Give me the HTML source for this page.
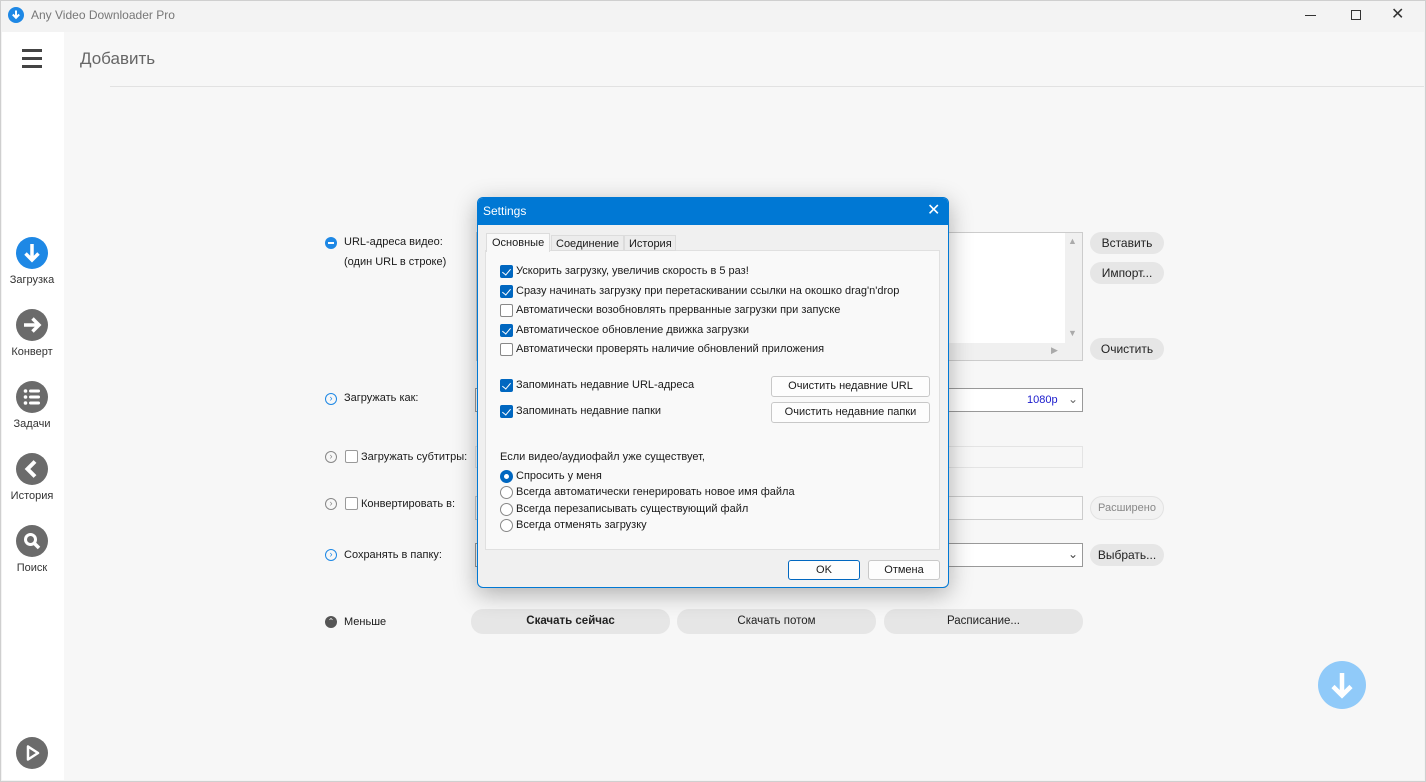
<!DOCTYPE html>
<html><head><meta charset="utf-8"><style>
*{box-sizing:border-box;margin:0;padding:0}
body{width:1426px;height:782px;background:#f3f3f3;font-family:"Liberation Sans","DejaVu Sans",sans-serif;font-size:12px;color:#1a1a1a;position:relative;overflow:hidden}
.abs{position:absolute}
.win{left:0;top:0;width:1426px;height:782px;border:1px solid #cfcfcf;background:#f3f3f3}
.side{left:2px;top:32px;width:62px;height:748px;background:#fff}
.main{left:64px;top:32px;width:1360px;height:748px;background:#f7f7f7}
.lbl{font-size:11px;color:#333;width:62px;text-align:center}
.btn{background:#e6e6e6;border-radius:12px;text-align:center;line-height:22px;font-size:12px;color:#222}
.field{background:#fff;border:1px solid #bdbdbd}
.dlg{left:477px;top:197px;width:472px;height:391px;background:#f0f0f0;border:1px solid #0078d4;border-radius:6px;box-shadow:0 6px 24px rgba(0,0,0,.3);overflow:hidden}
.cb{width:13px;height:13px;border:1px solid #888;background:#fff;border-radius:2px}
.cb.on{background:#0067c0;border-color:#0067c0}
.cb.on::after{content:"";position:absolute;left:3px;top:1px;width:4px;height:7px;border:solid #fff;border-width:0 1.5px 1.5px 0;transform:rotate(40deg)}
.rd{width:13px;height:13px;border:1px solid #888;border-radius:50%;background:#fff}
.t{font-size:11px;white-space:nowrap}
.pb{background:#fdfdfd;border:1px solid #c8c8c8;border-radius:3px;text-align:center;font-size:11px;line-height:19px}
.ci{width:12px;height:12px;border-radius:50%;border:1px solid #1e88e5;color:#1e88e5;font-size:9px;line-height:9px;text-align:center}
</style></head><body>
<div class="abs win"></div>
<svg class="abs" style="left:8px;top:7px" width="16" height="16"><circle cx="8" cy="8" r="8" fill="#1e88e5"/><path d="M8 3.5v7M4.8 7.5L8 10.8 11.2 7.5" stroke="#fff" stroke-width="2" fill="none"/></svg>
<div class="abs" style="left:31px;top:8px;font-size:12px;color:#777">Any Video Downloader Pro</div>
<div class="abs" style="left:1305px;top:15px;width:11px;border-top:1px solid #333"></div>
<div class="abs" style="left:1351px;top:10px;width:10px;height:10px;border:1px solid #333"></div>
<div class="abs" style="left:1391px;top:4px;font-size:16px;color:#333">✕</div>
<div class="abs side"></div>
<div class="abs main"></div>
<div class="abs" style="left:22px;top:49px;width:20px;height:3px;background:#444;box-shadow:0 8px 0 #444,0 16px 0 #444"></div>
<div class="abs" style="left:80px;top:49px;font-size:17px;color:#666">Добавить</div>
<div class="abs" style="left:110px;top:86px;width:1314px;border-top:1px solid #e2e2e2"></div>
<svg class="abs" style="left:16px;top:237px" width="32" height="32"><circle cx="16" cy="16" r="16" fill="#1e88e5"/><path d="M16 7v16M9.5 16.5L16 23l6.5-6.5" stroke="#fff" stroke-width="3.5" fill="none"/></svg>
<div class="abs lbl" style="left:1px;top:274px">Загрузка</div>
<svg class="abs" style="left:16px;top:309px" width="32" height="32"><circle cx="16" cy="16" r="16" fill="#6b6b6b"/><path d="M8 16h15M16.5 9.5L23 16l-6.5 6.5" stroke="#fff" stroke-width="3.5" fill="none"/></svg>
<div class="abs lbl" style="left:1px;top:346px">Конверт</div>
<svg class="abs" style="left:16px;top:381px" width="32" height="32"><circle cx="16" cy="16" r="16" fill="#6b6b6b"/><g fill="#fff"><circle cx="9.5" cy="10" r="1.8"/><circle cx="9.5" cy="16" r="1.8"/><circle cx="9.5" cy="22" r="1.8"/><rect x="13" y="8.5" width="11" height="3" rx="1.5"/><rect x="13" y="14.5" width="11" height="3" rx="1.5"/><rect x="13" y="20.5" width="11" height="3" rx="1.5"/></g></svg>
<div class="abs lbl" style="left:1px;top:418px">Задачи</div>
<svg class="abs" style="left:16px;top:453px" width="32" height="32"><circle cx="16" cy="16" r="16" fill="#6b6b6b"/><path d="M19 8.5L11.5 16l7.5 7.5" stroke="#fff" stroke-width="4" fill="none"/></svg>
<div class="abs lbl" style="left:1px;top:490px">История</div>
<svg class="abs" style="left:16px;top:525px" width="32" height="32"><circle cx="16" cy="16" r="16" fill="#6b6b6b"/><circle cx="14.5" cy="14.5" r="5" stroke="#fff" stroke-width="3" fill="none"/><path d="M18 18l5 5" stroke="#fff" stroke-width="3.5"/></svg>
<div class="abs lbl" style="left:1px;top:562px">Поиск</div>
<svg class="abs" style="left:16px;top:737px" width="32" height="32"><circle cx="16" cy="16" r="16" fill="#6b6b6b"/><path d="M12 9.5v13l10-6.5z" stroke="#fff" stroke-width="2.5" fill="none" stroke-linejoin="round"/></svg>
<div class="abs lbl" style="left:1px;top:562px;display:none"></div>
<!-- form -->
<div class="abs" style="left:325px;top:237px;width:12px;height:12px;border-radius:50%;background:#1e88e5"><div style="margin:5px 3px;height:2px;background:#fff"></div></div>
<div class="abs t" style="left:344px;top:236px">URL-адреса видео:</div>
<div class="abs t" style="left:344px;top:256px">(один URL в строке)</div>
<div class="abs field" style="left:476px;top:232px;width:607px;height:129px;border-color:#ccc"></div>
<div class="abs" style="left:1065px;top:233px;width:17px;height:127px;background:#f0f0f0"></div>
<div class="abs" style="left:477px;top:343px;width:605px;height:17px;background:#f0f0f0"></div>
<div class="abs" style="left:1068px;top:236px;color:#aaa;font-size:9px">▲</div>
<div class="abs" style="left:1068px;top:328px;color:#aaa;font-size:9px">▼</div>
<div class="abs" style="left:1051px;top:345px;color:#aaa;font-size:9px">▶</div>
<div class="abs btn" style="left:1090px;top:232px;width:74px">Вставить</div>
<div class="abs btn" style="left:1090px;top:262px;width:74px">Импорт...</div>
<div class="abs btn" style="left:1090px;top:338px;width:74px">Очистить</div>
<div class="abs ci" style="left:325px;top:393px">›</div>
<div class="abs t" style="left:344px;top:392px">Загружать как:</div>
<div class="abs field" style="left:475px;top:388px;width:608px;height:24px;border-color:#999"></div>
<div class="abs t" style="left:1027px;top:394px;color:#1a1acc">1080p</div>
<div class="abs" style="left:1068px;top:392px;color:#666">⌄</div>
<div class="abs ci" style="left:325px;top:451px;border-color:#888;color:#888">›</div>
<div class="abs cb" style="left:345px;top:450px;border-color:#999"></div>
<div class="abs t" style="left:361px;top:451px">Загружать субтитры:</div>
<div class="abs" style="left:475px;top:446px;width:608px;height:22px;border:1px solid #e4e4e4;background:#f7f7f7"></div>
<div class="abs ci" style="left:325px;top:498px;border-color:#888;color:#888">›</div>
<div class="abs cb" style="left:345px;top:497px;border-color:#999"></div>
<div class="abs t" style="left:361px;top:498px">Конвертировать в:</div>
<div class="abs" style="left:475px;top:496px;width:608px;height:24px;border:1px solid #ccc;background:#f9f9f9"></div>
<div class="abs btn" style="left:1090px;top:496px;width:74px;color:#888;background:#f2f2f2;border:1px solid #e2e2e2;font-size:11px">Расширено</div>
<div class="abs ci" style="left:325px;top:549px">›</div>
<div class="abs t" style="left:344px;top:549px">Сохранять в папку:</div>
<div class="abs field" style="left:475px;top:543px;width:608px;height:24px;border-color:#999"></div>
<div class="abs" style="left:1068px;top:547px;color:#444">⌄</div>
<div class="abs btn" style="left:1090px;top:544px;width:74px">Выбрать...</div>
<div class="abs" style="left:325px;top:616px;width:12px;height:12px;border-radius:50%;background:#555;color:#fff;font-size:8px;text-align:center;line-height:11px">⌃</div>
<div class="abs t" style="left:344px;top:616px">Меньше</div>
<div class="abs btn" style="left:471px;top:609px;width:199px;height:25px;line-height:25px;font-weight:bold;font-size:11.5px">Скачать сейчас</div>
<div class="abs btn" style="left:677px;top:609px;width:199px;height:25px;line-height:25px;font-size:11.5px">Скачать потом</div>
<div class="abs btn" style="left:884px;top:609px;width:199px;height:25px;line-height:25px;font-size:11.5px">Расписание...</div>
<svg class="abs" style="left:1318px;top:661px" width="48" height="48"><circle cx="24" cy="24" r="24" fill="#90caf9"/><path d="M24 12v22M15 25.5L24 34.5 33 25.5" stroke="#fff" stroke-width="4.5" fill="none"/></svg>
<!-- dialog -->
<div class="abs dlg">
<div class="abs" style="left:0;top:0;width:472px;height:27px;background:#0078d4"></div>
<div class="abs" style="left:5px;top:6px;color:#fff;font-size:12px">Settings</div>
<div class="abs" style="left:449px;top:2px;color:#fff;font-size:16px">✕</div>
<div class="abs" style="left:7px;top:52px;width:455px;height:300px;background:#f9f9f9;border:1px solid #e0e0e0"></div>
<div class="abs" style="left:8px;top:35px;width:64px;height:19px;background:#f9f9f9;border:1px solid #dcdcdc;border-bottom:none;font-size:11px;padding:3px 5px">Основные</div>
<div class="abs" style="left:73px;top:37px;width:73px;height:16px;background:#ececec;border:1px solid #dcdcdc;font-size:11px;padding:2px 4px">Соединение</div>
<div class="abs" style="left:146px;top:37px;width:52px;height:16px;background:#ececec;border:1px solid #dcdcdc;font-size:11px;padding:2px 4px">История</div>
<div class="abs cb on" style="left:22px;top:67px"></div><div class="abs t" style="left:38px;top:67px">Ускорить загрузку, увеличив скорость в 5 раз!</div>
<div class="abs cb on" style="left:22px;top:87px"></div><div class="abs t" style="left:38px;top:87px">Сразу начинать загрузку при перетаскивании ссылки на окошко drag'n'drop</div>
<div class="abs cb" style="left:22px;top:106px"></div><div class="abs t" style="left:38px;top:106px">Автоматически возобновлять прерванные загрузки при запуске</div>
<div class="abs cb on" style="left:22px;top:126px"></div><div class="abs t" style="left:38px;top:126px">Автоматическое обновление движка загрузки</div>
<div class="abs cb" style="left:22px;top:145px"></div><div class="abs t" style="left:38px;top:145px">Автоматически проверять наличие обновлений приложения</div>
<div class="abs cb on" style="left:22px;top:181px"></div><div class="abs t" style="left:38px;top:181px">Запоминать недавние URL-адреса</div>
<div class="abs cb on" style="left:22px;top:207px"></div><div class="abs t" style="left:38px;top:207px">Запоминать недавние папки</div>
<div class="abs pb" style="left:293px;top:178px;width:159px;height:21px">Очистить недавние URL</div>
<div class="abs pb" style="left:293px;top:204px;width:159px;height:21px">Очистить недавние папки</div>
<div class="abs t" style="left:22px;top:253px">Если видео/аудиофайл уже существует,</div>
<div class="abs rd" style="left:22px;top:272px;border:4px solid #0067c0"></div><div class="abs t" style="left:38px;top:272px">Спросить у меня</div>
<div class="abs rd" style="left:22px;top:288px"></div><div class="abs t" style="left:38px;top:288px">Всегда автоматически генерировать новое имя файла</div>
<div class="abs rd" style="left:22px;top:305px"></div><div class="abs t" style="left:38px;top:305px">Всегда перезаписывать существующий файл</div>
<div class="abs rd" style="left:22px;top:321px"></div><div class="abs t" style="left:38px;top:321px">Всегда отменять загрузку</div>
<div class="abs pb" style="left:310px;top:362px;width:72px;height:20px;border:1px solid #0067c0">OK</div>
<div class="abs pb" style="left:390px;top:362px;width:72px;height:20px">Отмена</div>
</div>
</body></html>
